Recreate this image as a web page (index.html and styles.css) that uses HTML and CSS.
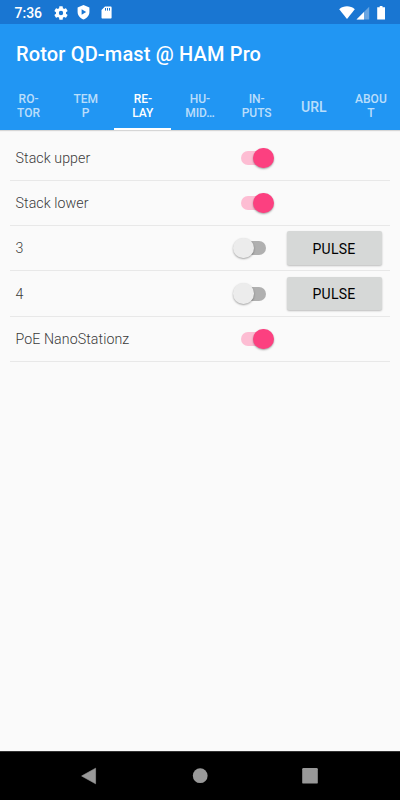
FILE: index.html
```html
<!DOCTYPE html>
<html lang="en">
<head>
<meta charset="utf-8">
<title>Rotor QD-mast @ HAM Pro</title>
<link rel="stylesheet" href="styles.css">
</head>
<body>
<div class="status">
  <span class="time">7:36</span>
  <svg class="gear" width="14" height="14" viewBox="2 2 20 20"><path fill="#fff" fill-rule="evenodd" d="M19.14 12.94c.04-.3.06-.61.06-.94s-.02-.64-.07-.94l2.03-1.58a.49.49 0 0 0 .12-.61l-1.92-3.32a.49.49 0 0 0-.59-.22l-2.39.96a7 7 0 0 0-1.62-.94l-.36-2.54A.48.48 0 0 0 13.92 2.4h-3.84c-.24 0-.43.17-.47.41l-.36 2.54c-.59.24-1.13.57-1.62.94l-2.39-.96a.48.48 0 0 0-.59.22L2.74 8.87a.47.47 0 0 0 .12.61l2.03 1.58a6 6 0 0 0 0 1.88l-2.03 1.58a.49.49 0 0 0-.12.61l1.92 3.32c.12.22.37.29.59.22l2.39-.96c.5.38 1.03.7 1.62.94l.36 2.54c.05.24.24.41.48.41h3.84c.24 0 .44-.17.47-.41l.36-2.54c.59-.24 1.13-.56 1.62-.94l2.39.96c.22.08.47 0 .59-.22l1.92-3.32a.47.47 0 0 0-.12-.61zM12 15.100a3.100 3.100 0 1 1 0-6.200 3.100 3.100 0 0 1 0 6.200z"/></svg>
  <svg class="shield" width="13" height="15" viewBox="0 0 13 15"><path fill="#fff" d="M6.500 0 12.400 2.400V7c0 3.400-2.500 6.400-5.900 7.400C3.100 13.400.6 10.400.6 7V2.400z"/><path fill="#1976d2" d="M4.600 4.300v5.400l4.600-2.700z"/></svg>
  <svg class="card" width="11" height="13" viewBox="0 0 11 13"><path fill="#fff" d="M4 .5h5.600c.6 0 1 .4 1 1v10c0 .6-.4 1-1 1H1.500c-.6 0-1-.4-1-1V4z"/><path stroke="#1976d2" stroke-width="1" d="M4.500 2v2.600M6.500 2v2.600M8.500 2v2.600"/></svg>
  <svg class="signals" width="50" height="16" viewBox="0 0 50 16"><path fill="#fff" d="M.2 4.200C4.700.4 11.300.4 15.800 4.200L8 14z"/><path fill="#fff" fill-opacity=".35" d="M30.200 1.800V14.500H17.500z"/><path fill="#fff" d="M25 7v7.500H17.500z"/><path fill="#fff" d="M40.700 1h2.800v1.300H46v12.200H38.200V2.300h2.500z"/></svg>
</div>
<header class="appbar">
  <h1>Rotor QD-mast @ HAM Pro</h1>
  <nav class="tabs">
    <div class="tab"><span>RO-<br>TOR</span></div>
    <div class="tab"><span>TEM<br>P</span></div>
    <div class="tab active"><span>RE-<br>LAY</span></div>
    <div class="tab"><span>HU-<br>MID…</span></div>
    <div class="tab"><span>IN-<br>PUTS</span></div>
    <div class="tab single"><span>URL</span></div>
    <div class="tab"><span>ABOU<br>T</span></div>
  </nav>
</header>
<main class="list">
  <div class="row"><span class="label">Stack upper</span><i class="switch on"></i></div>
  <div class="row"><span class="label">Stack lower</span><i class="switch on"></i></div>
  <div class="row"><span class="label">3</span><i class="switch"></i><button>PULSE</button></div>
  <div class="row tall"><span class="label">4</span><i class="switch"></i><button>PULSE</button></div>
  <div class="row"><span class="label">PoE NanoStationz</span><i class="switch on"></i></div>
</main>
<footer class="navbar">
  <svg width="18" height="18" viewBox="0 0 18 18"><path fill="#999" d="M14.600 1.200v15.600L.6 9z" stroke="#999" stroke-width=".6" stroke-linejoin="round"/></svg>
  <svg width="18" height="18" viewBox="0 0 18 18"><circle cx="9.200" cy="8.700" r="7.400" fill="#999"/></svg>
  <svg width="18" height="18" viewBox="0 0 18 18"><rect x="1.200" y="1" width="15.600" height="15.600" rx="1.200" fill="#999"/></svg>
</footer>
</body>
</html>
```
FILE: styles.css
```css
* { box-sizing: border-box; }
body {
  margin: 0;
  width: 400px;
  height: 800px;
  display: flex;
  flex-direction: column;
  background: #fafafa;
  font-family: Roboto, sans-serif;
  overflow: hidden;
}
.status {
  height: 24px;
  flex: none;
  background: #1976d2;
  display: flex;
  align-items: center;
  padding: 1px 11px 0 14.500px;
  color: #fff;
}
.time { width: 39px; font-size: 14px; font-weight: 500; line-height: 16px; }
.shield { margin-left: 9px; }
.card { margin-left: 11px; }
.signals { margin-left: auto; }
.appbar {
  height: 106px;
  flex: none;
  background: #2196f3;
  box-shadow: 0 1px 1px rgba(0, 0, 0, .14);
}
h1 {
  margin: 0;
  height: 58px;
  padding: 0 16px;
  font-size: 20px;
  font-weight: 500;
  letter-spacing: .16px;
  line-height: 60px;
  color: #fff;
  white-space: nowrap;
}
.tabs {
  height: 48px;
  display: grid;
  grid-template-columns: repeat(7, 1fr);
  color: rgba(255, 255, 255, .7);
}
.tab {
  display: flex;
  align-items: center;
  justify-content: center;
  text-align: center;
  font-size: 12px;
  font-weight: 500;
  line-height: 14px;
}
.tab.single { font-size: 14px; padding: 1px 1px 0 0; }
.tab:last-child, .tab:nth-child(5) { padding-right: 1px; }
.active { color: #fff; box-shadow: inset 0 -2px #fff; }
.list {
  flex: 1;
  padding: 6px 10px 0;
}
.row {
  height: 45px;
  display: grid;
  grid-template-columns: 222.500px 54px 95px;
  align-items: center;
  border-bottom: 1px solid #e8e8e8;
}
.tall { height: 46px; }
.label {
  padding-left: 5.500px;
  font-size: 14.200px;
  font-weight: 300;
  letter-spacing: .08px;
  color: #3a3a3a;
}
.switch {
  position: relative;
  width: 30px;
  height: 14px;
  margin-left: 3px;
  border-radius: 7px;
  background: #b0b0b0;
}
.switch::after {
  content: "";
  position: absolute;
  left: -2.500px;
  top: -3.300px;
  width: 20.600px;
  height: 20.600px;
  border-radius: 50%;
  background: #ececec;
  box-shadow: 0 1px 2px rgba(0, 0, 0, .35);
}
.switch.on { margin-left: 8.500px; background: #fdbdd3; }
.switch.on::after { left: 12px; background: #fc4080; }
button {
  width: 95px;
  height: 33.500px;
  padding: 0;
  border: 0;
  border-radius: 2px;
  background: #d6d8d7;
  box-shadow: 0 1px 2px rgba(0, 0, 0, .25);
  font: 400 14px/34px Roboto, sans-serif;
  letter-spacing: .3px;
  color: #000;
  padding-top: 1px;
}
.tall button { padding-top: 0; }
.navbar {
  height: 49px;
  flex: none;
  background: #000;
  border-top: 1px solid #333;
  display: flex;
  align-items: center;
  justify-content: center;
  gap: 92px;
}
```
